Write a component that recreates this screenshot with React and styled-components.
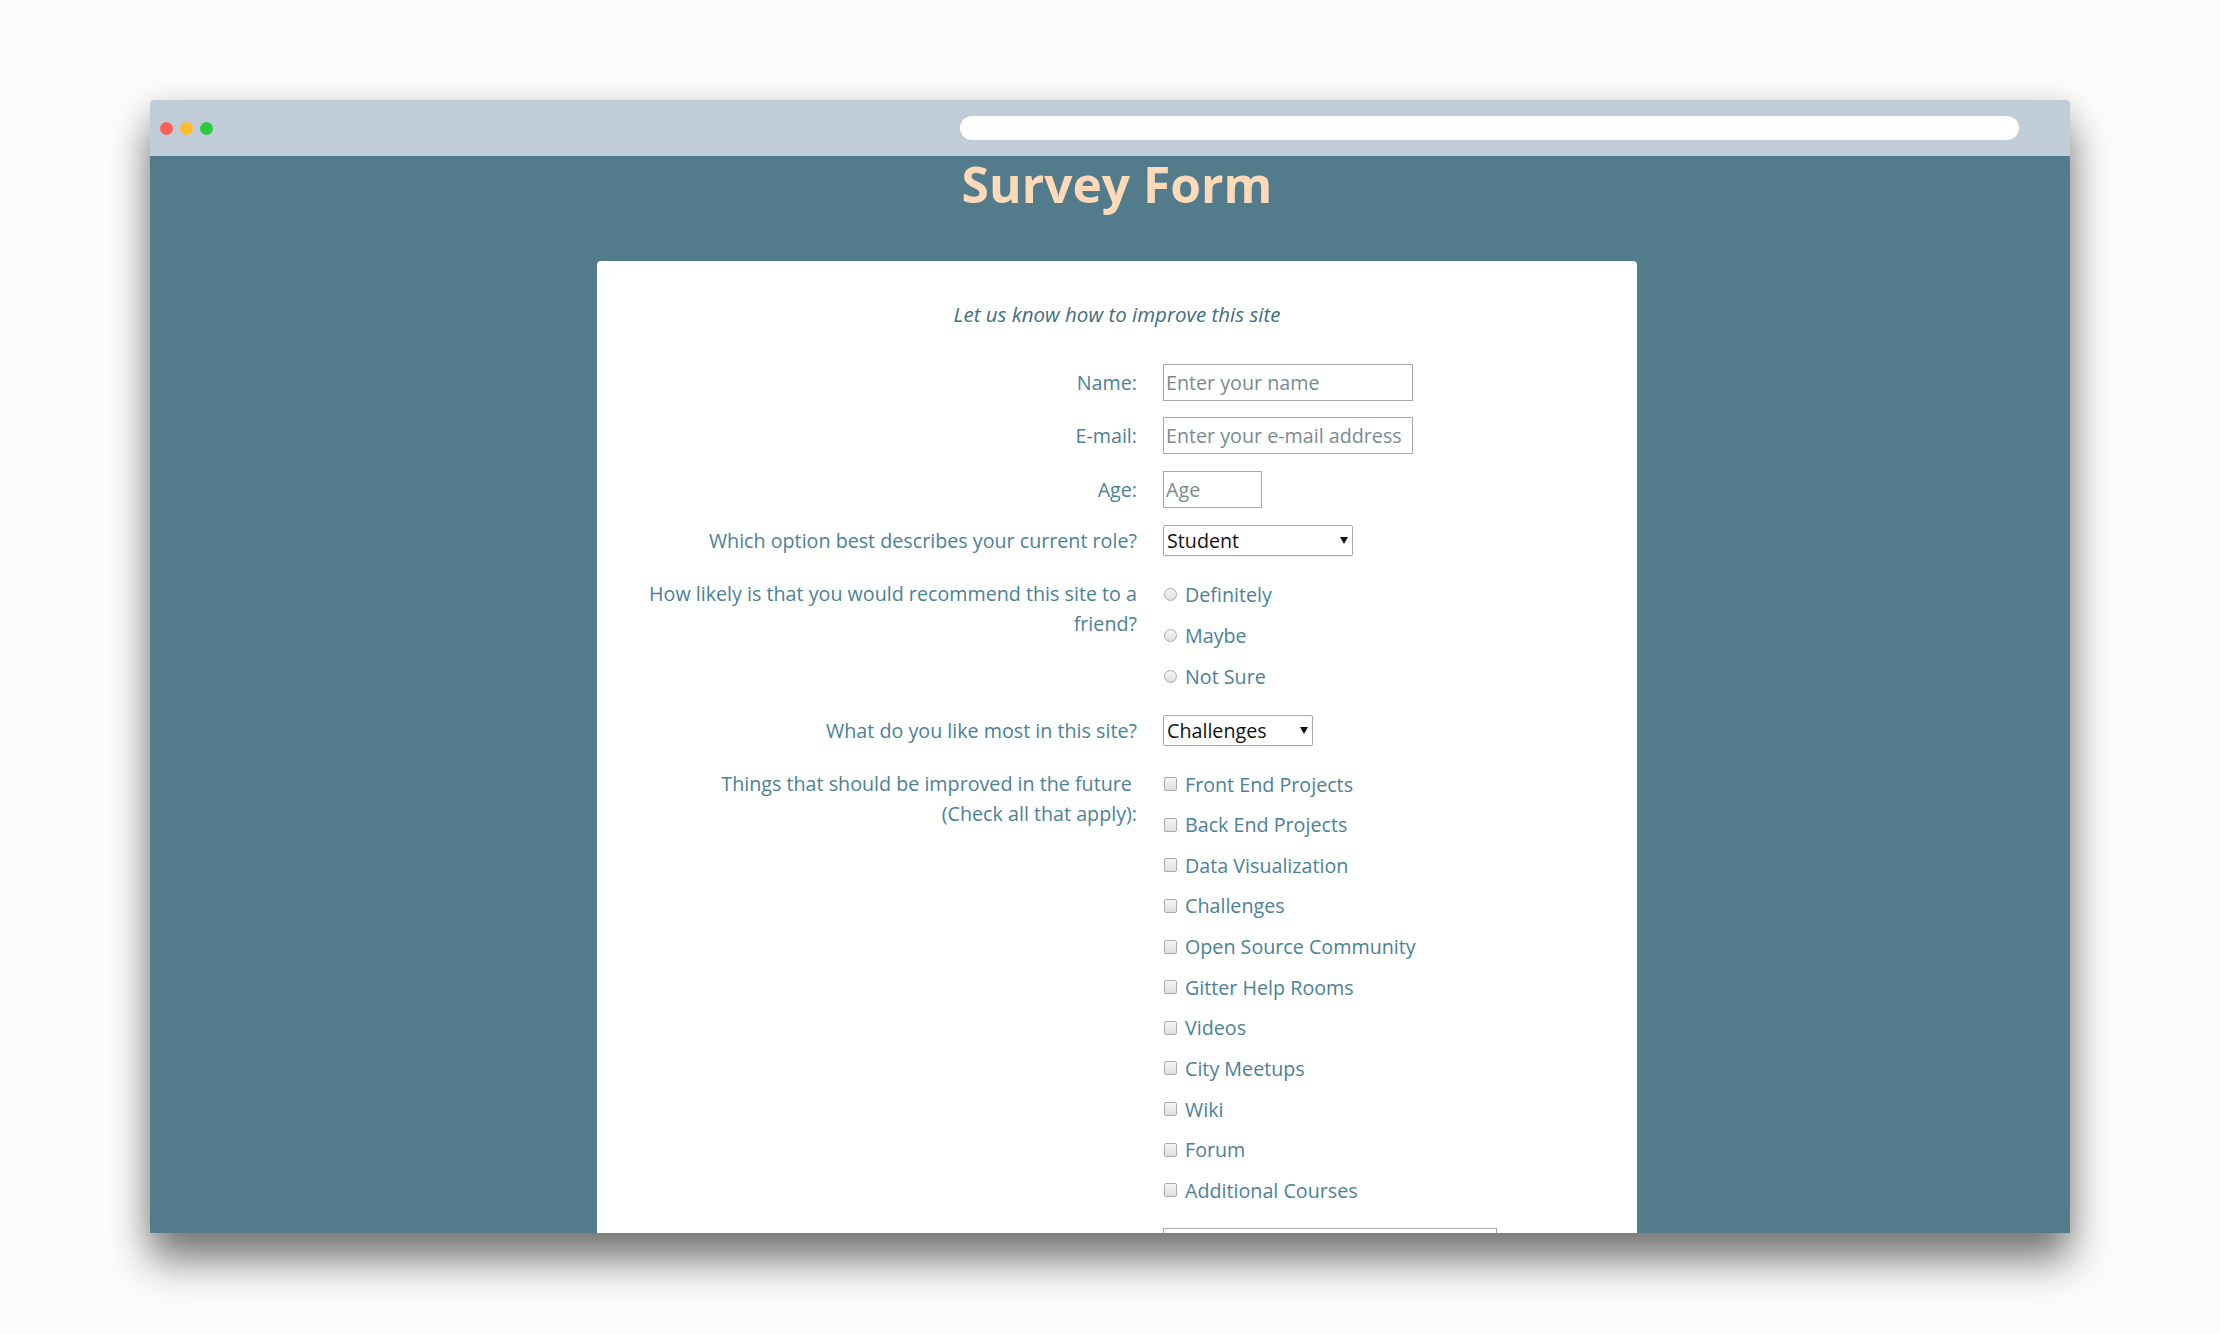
import React from "react";
import styled, { createGlobalStyle } from "styled-components";

const GlobalStyle = createGlobalStyle`
  html, body {
    margin: 0;
    padding: 0;
    background: #fcfdfb;
  }
  body {
    font-family: "Open Sans", "Noto Sans", sans-serif;
  }
  * {
    box-sizing: border-box;
  }
`;

const Page = styled.div`
  height: 1334px;
  padding-top: 100px;
  overflow: hidden;
`;

const BrowserWindow = styled.div`
  width: 1920px;
  margin: 0 auto;
  border-radius: 4px 4px 0 0;
  box-shadow: 0 28px 42px rgba(0, 0, 0, 0.5), 0 4px 30px rgba(0, 0, 0, 0.12);
`;

const TitleBar = styled.div`
  height: 56px;
  display: flex;
  align-items: center;
  padding: 0 51px 0 10px;
  background: #c0cdd9;
  border-radius: 4px 4px 0 0;
`;

const Dots = styled.div`
  display: flex;
  gap: 7px;
`;

const Dot = styled.span`
  width: 13px;
  height: 13px;
  border-radius: 50%;
  background: ${(p) => p.$color};
`;

const AddressBar = styled.div`
  margin-left: auto;
  width: 1059px;
  height: 24px;
  border-radius: 12px;
  background: #ffffff;
`;

const Viewport = styled.div`
  height: 1077px;
  overflow: hidden;
  padding: 1px 0 0 14px;
  background: #527b8b;
`;

const Heading = styled.h1`
  margin: 0 0 50px;
  font-size: 49.7px;
  line-height: 54px;
  font-weight: 700;
  text-align: center;
  color: #ffdab9;
`;

const Card = styled.div`
  width: 1040px;
  margin: 0 auto;
  padding-top: 40px;
  padding-bottom: 40px;
  background: #ffffff;
  border-radius: 4px;
`;

const Subtitle = styled.p`
  margin: 0 0 37px;
  font-size: 20.5px;
  line-height: 26px;
  font-style: italic;
  text-align: center;
  color: #3f6e80;
`;

const Row = styled.div`
  display: grid;
  grid-template-columns: 540px 1fr;
  column-gap: 26px;
  align-items: start;
  margin-top: ${(p) => p.$gap ?? 0}px;
`;

const Label = styled.label`
  text-align: right;
  font-size: 19.7px;
  line-height: ${(p) => p.$lh || 30}px;
  color: #4c8196;
`;

const TextInput = styled.input`
  width: ${(p) => p.$w}px;
  height: 37px;
  margin: 0;
  padding: 0 2px;
  border: 1px solid #a8a8a8;
  border-radius: 0;
  font-family: inherit;
  font-size: 19.7px;
  color: #333;
  background: #fff;
  outline: none;
  &::placeholder {
    color: #7b8a91;
  }
`;

const SelectWrap = styled.div`
  position: relative;
  width: ${(p) => p.$w}px;
  height: 31px;
`;

const Select = styled.select`
  appearance: none;
  width: 100%;
  height: 100%;
  margin: 0;
  padding: 0 20px 0 3px;
  border: 1px solid #a9a9a9;
  border-radius: 2px;
  font-family: inherit;
  font-size: 19.7px;
  color: #111;
  background: #fff;
  box-shadow: 0 1px 0 rgba(0, 0, 0, 0.06);
`;

const Arrow = styled.span`
  position: absolute;
  right: 5px;
  top: 12px;
  width: 0;
  height: 0;
  border-left: 4px solid transparent;
  border-right: 4px solid transparent;
  border-top: 7px solid #111;
  pointer-events: none;
`;

const Options = styled.div`
  display: flex;
  flex-direction: column;
  gap: ${(p) => p.$gap}px;
`;

const Option = styled.label`
  display: flex;
  align-items: center;
  height: 30px;
  font-size: 19.7px;
  color: #4c8196;
`;

const Tick = styled.input`
  appearance: none;
  flex: none;
  width: 13px;
  height: ${(p) => (p.type === "radio" ? 13 : 14)}px;
  margin: 0 8px 0 1px;
  border: 1px solid #ababab;
  border-radius: ${(p) => (p.type === "radio" ? "50%" : "2px")};
  background: linear-gradient(#f6f6f6, #dedede);
`;

const TextArea = styled.textarea`
  display: block;
  width: 334px;
  height: 120px;
  margin: 0;
  border: 1px solid #a9a9a9;
  resize: none;
  font-family: inherit;
  font-size: 19.7px;
`;

const Spacer = styled.div``;

const roles = ["Student", "Full Stack Developer", "Front End Developer", "Back End Developer", "Other"];
const likes = ["Challenges", "Projects", "Community", "Open Source"];
const recommend = ["Definitely", "Maybe", "Not Sure"];
const improvements = [
  "Front End Projects",
  "Back End Projects",
  "Data Visualization",
  "Challenges",
  "Open Source Community",
  "Gitter Help Rooms",
  "Videos",
  "City Meetups",
  "Wiki",
  "Forum",
  "Additional Courses",
];

const Dropdown = ({ w, items, id }) => (
  <SelectWrap $w={w}>
    <Select id={id} defaultValue={items[0]}>
      {items.map((item) => (
        <option key={item}>{item}</option>
      ))}
    </Select>
    <Arrow />
  </SelectWrap>
);

export default function App() {
  return (
    <>
      <GlobalStyle />
      <Page>
        <BrowserWindow>
          <TitleBar>
            <Dots>
              <Dot $color="#fe5f57" />
              <Dot $color="#febc2e" />
              <Dot $color="#28c840" />
            </Dots>
            <AddressBar />
          </TitleBar>
          <Viewport>
            <Heading>Survey Form</Heading>
            <Card>
              <Subtitle>Let us know how to improve this site</Subtitle>
              <form>
                <Row>
                  <Label $lh={37} htmlFor="name">Name:</Label>
                  <TextInput id="name" $w={250} placeholder="Enter your name" />
                </Row>
                <Row $gap={16}>
                  <Label $lh={37} htmlFor="email">E-mail:</Label>
                  <TextInput id="email" $w={250} placeholder="Enter your e-mail address" />
                </Row>
                <Row $gap={17}>
                  <Label $lh={37} htmlFor="age">Age:</Label>
                  <TextInput id="age" $w={99} placeholder="Age" />
                </Row>
                <Row $gap={17}>
                  <Label $lh={31} htmlFor="role">Which option best describes your current role?</Label>
                  <Dropdown id="role" w={190} items={roles} />
                </Row>
                <Row $gap={23}>
                  <Label>
                    How likely is that you would recommend this site to a
                    <br />
                    friend?
                  </Label>
                  <Options $gap={11}>
                    {recommend.map((r) => (
                      <Option key={r}>
                        <Tick type="radio" name="recommend" />
                        {r}
                      </Option>
                    ))}
                  </Options>
                </Row>
                <Row $gap={23.5}>
                  <Label $lh={31} htmlFor="like">What do you like most in this site?</Label>
                  <Dropdown id="like" w={150} items={likes} />
                </Row>
                <Row $gap={23.5}>
                  <Label>
                    Things that should be improved in the future&nbsp;
                    <br />
                    (Check all that apply):
                  </Label>
                  <Options $gap={10.65}>
                    {improvements.map((item) => (
                      <Option key={item}>
                        <Tick type="checkbox" />
                        {item}
                      </Option>
                    ))}
                  </Options>
                </Row>
                <Row $gap={23}>
                  <Spacer />
                  <TextArea placeholder="Enter your comment here..." />
                </Row>
              </form>
            </Card>
          </Viewport>
        </BrowserWindow>
      </Page>
    </>
  );
}
